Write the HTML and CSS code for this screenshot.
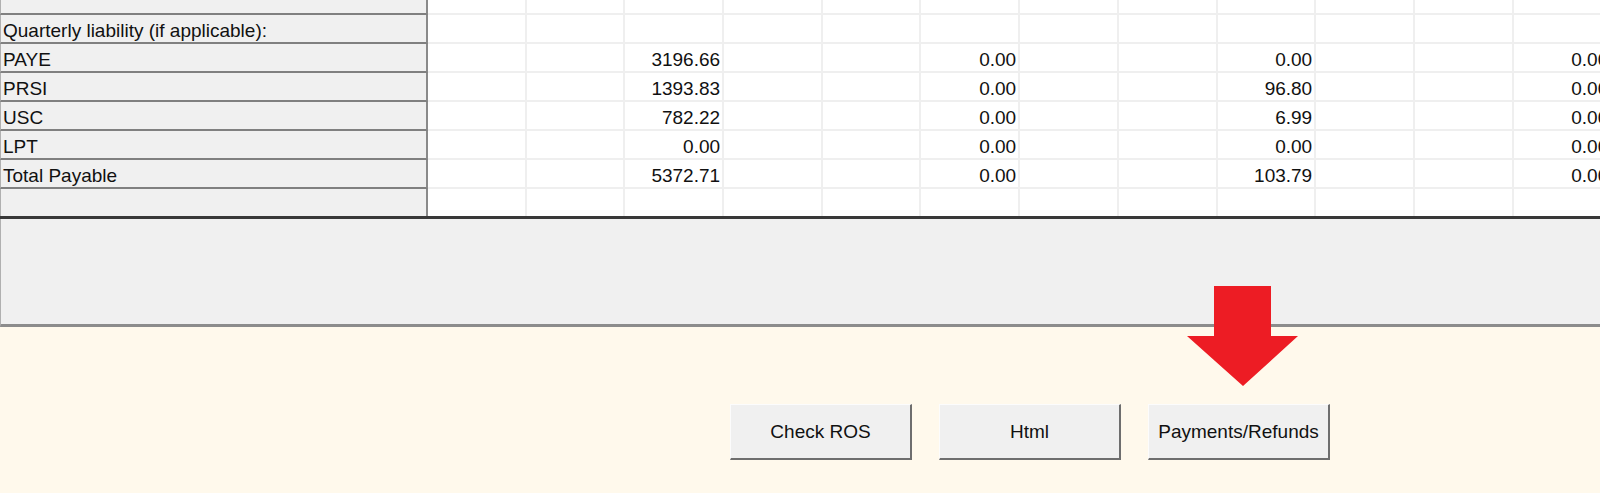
FILE: index.html
```html
<!DOCTYPE html>
<html>
    <head>
        <title>Quarterly liability</title>
        <link rel="stylesheet" href="styles.css">
    </head>
    <body>
        <div class="screen">
            <div class="sheet">
                <div class="row first">
                    <div class="label"></div>
                    <div></div><div></div><div></div><div></div><div></div><div></div>
                    <div></div><div></div><div></div><div></div><div></div><div></div>
                </div>
                <div class="row">
                    <div class="label">Quarterly liability (if applicable):</div>
                    <div></div><div></div><div></div><div></div><div></div><div></div>
                    <div></div><div></div><div></div><div></div><div></div><div></div>
                </div>
                <div class="row">
                    <div class="label">PAYE</div>
                    <div></div><div></div><div>3196.66</div>
                    <div></div><div></div><div>0.00</div>
                    <div></div><div></div><div>0.00</div>
                    <div></div><div></div><div>0.00</div>
                </div>
                <div class="row">
                    <div class="label">PRSI</div>
                    <div></div><div></div><div>1393.83</div>
                    <div></div><div></div><div>0.00</div>
                    <div></div><div></div><div>96.80</div>
                    <div></div><div></div><div>0.00</div>
                </div>
                <div class="row">
                    <div class="label">USC</div>
                    <div></div><div></div><div>782.22</div>
                    <div></div><div></div><div>0.00</div>
                    <div></div><div></div><div>6.99</div>
                    <div></div><div></div><div>0.00</div>
                </div>
                <div class="row">
                    <div class="label">LPT</div>
                    <div></div><div></div><div>0.00</div>
                    <div></div><div></div><div>0.00</div>
                    <div></div><div></div><div>0.00</div>
                    <div></div><div></div><div>0.00</div>
                </div>
                <div class="row">
                    <div class="label">Total Payable</div>
                    <div></div><div></div><div>5372.71</div>
                    <div></div><div></div><div>0.00</div>
                    <div></div><div></div><div>103.79</div>
                    <div></div><div></div><div>0.00</div>
                </div>
                <div class="row last">
                    <div class="label"></div>
                    <div></div><div></div><div></div><div></div><div></div><div></div>
                    <div></div><div></div><div></div><div></div><div></div><div></div>
                </div>
            </div>
            <div class="panel"></div>
            <div class="footer">
                <div class="btn">Check ROS</div>
                <div class="btn">Html</div>
                <div class="btn">Payments/Refunds</div>
            </div>
            <svg class="arrow" width="111" height="100" viewBox="0 0 111 100">
                <polygon points="27,0 84,0 84,50 111,50 56,100 0,50 27,50" fill="#ed1c24"/>
            </svg>
        </div>
    </body>
</html>
```

FILE: styles.css
```css
html, body {
    margin: 0;
    overflow: hidden;
}
.screen {
    position: relative;
    width: 1600px;
    height: 493px;
    overflow: hidden;
    font-family: "Liberation Sans", Arial, sans-serif;
    font-size: 19px;
    color: #111;
}
.sheet {
    width: 1612px;
    background-color: white;
    border-bottom: 3px solid #383838;
}
.row {
    display: grid;
    grid-template-columns: 428px repeat(12, 98.7px);
    height: 29px;
}
.row > div {
    box-sizing: border-box;
    border-right: 2px solid #efefef;
    border-bottom: 2px solid #efefef;
    padding: 4px 2px 0 0;
    line-height: 23px;
    text-align: right;
    white-space: nowrap;
}
.row > .label {
    background-color: #f0f0f0;
    border-left: 1px solid #b0b0b0;
    border-right: 2px solid #8a8a8a;
    border-bottom: 2px solid #808080;
    padding-left: 2px;
    text-align: left;
}
.row.first {
    height: 15px;
}
.row.last {
    height: 27px;
}
.row.last > div {
    border-bottom: none;
}
.panel {
    height: 105px;
    background-color: #f0f0f0;
    border-left: 1px solid #b0b0b0;
    border-bottom: 3px solid #8c8c8c;
}
.footer {
    height: 166px;
    background-color: #fff9ec;
    display: flex;
    gap: 27px;
    padding: 77px 0 0 730px;
    box-sizing: border-box;
}
.btn {
    box-sizing: border-box;
    width: 182px;
    height: 56px;
    background-color: #f0f0f0;
    border-top: 1px solid #fcfcfc;
    border-left: 1px solid #fcfcfc;
    border-right: 2px solid #6e6e6e;
    border-bottom: 2px solid #6e6e6e;
    display: flex;
    align-items: center;
    justify-content: center;
}
.arrow {
    position: absolute;
    left: 1187px;
    top: 286px;
}
```
